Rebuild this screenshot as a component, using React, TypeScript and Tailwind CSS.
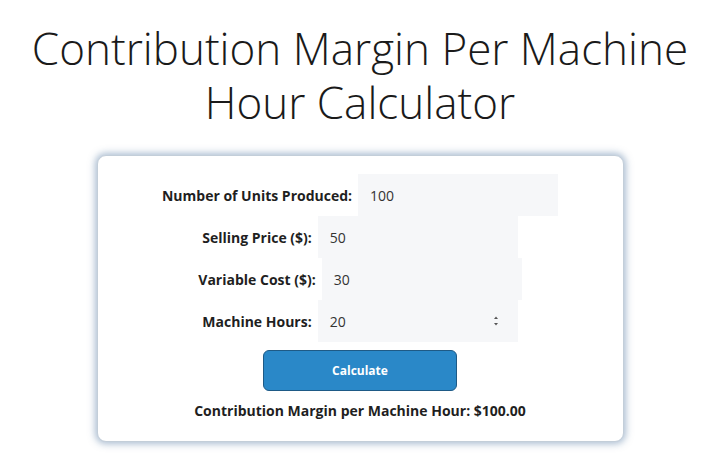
export default function App() {
  const fields = [
    { label: "Number of Units Produced:", value: "100" },
    { label: "Selling Price ($):", value: "50" },
    { label: "Variable Cost ($):", value: "30" },
    { label: "Machine Hours:", value: "20", spinner: true },
  ];

  return (
    <div className="min-h-[466px] bg-white font-['Open_Sans',sans-serif] text-[#222]">
      <h1 className="pt-[21px] text-center text-[44px] font-light leading-[54px] text-[#1a1a1a]">
        Contribution Margin Per Machine
        <br />
        Hour Calculator
      </h1>

      <div className="mx-auto mt-[26px] w-[527px] rounded-[9px] border border-[#c3ced9] bg-white px-4 pt-[18px] pb-[20px] shadow-[0_0_7px_2px_rgba(90,125,165,0.5)]">
        {fields.map((f) => (
          <div key={f.label} className="flex items-center justify-center">
            <label className="mr-[6px] text-[14px] font-bold text-[#1f1f1f]">{f.label}</label>
            <div className="relative flex h-[42px] w-[200px] items-center bg-[#f6f7f9] pl-3 text-[14px] text-[#333]">
              {f.value}
              {f.spinner && (
                <svg className="absolute right-[19px] top-[15px]" width="6" height="12" viewBox="0 0 6 12">
                  <path d="M1 4 L3 1.5 L5 4 Z" fill="#555" />
                  <path d="M1 8 L3 10.5 L5 8 Z" fill="#555" />
                </svg>
              )}
            </div>
          </div>
        ))}

        <div className="mt-2 flex justify-center">
          <button className="h-[41px] w-[194px] rounded-[6px] border border-[#1e5a86] bg-[#2a88c8] text-[12px] font-bold text-white">
            Calculate
          </button>
        </div>

        <p className="mt-[9px] text-center text-[14px] font-bold text-[#1f1f1f]">
          Contribution Margin per Machine Hour: $100.00
        </p>
      </div>
    </div>
  );
}
